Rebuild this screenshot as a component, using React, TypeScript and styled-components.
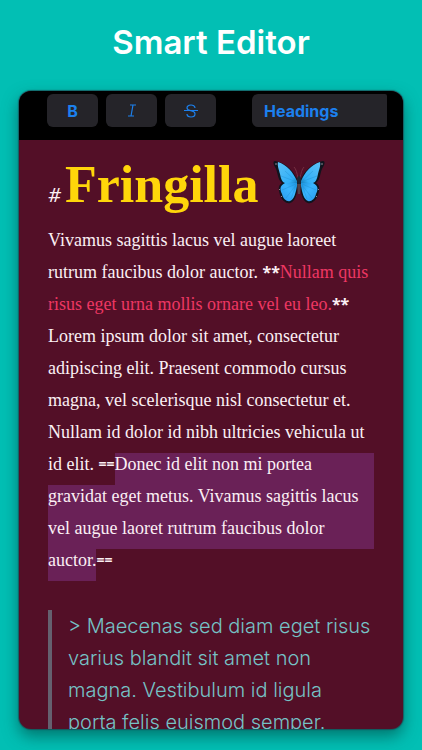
import React from "react";
import styled, { createGlobalStyle } from "styled-components";

const GlobalStyle = createGlobalStyle`
  * { box-sizing: border-box; }
  body { margin: 0; background: #02bfb4; }
`;

const Page = styled.main`
  height: 100vh;
  display: flex;
  flex-direction: column;
  padding: 0 19px 21px;
  background: #02bfb4;
`;

const Title = styled.h1`
  margin: 0;
  padding: 21px 0 28px;
  color: #ffffff;
  font: 600 33px/42px Inter, sans-serif;
  text-align: center;
`;

const Editor = styled.section`
  flex: 1;
  min-height: 0;
  display: flex;
  flex-direction: column;
  overflow: hidden;
  border-radius: 12px;
  background: #530f27;
  box-shadow: 0 0 1px 1px rgba(30, 70, 80, 0.7), 0 7px 16px rgba(0, 65, 60, 0.6);
`;

const Toolbar = styled.div`
  display: flex;
  flex: none;
  gap: 8px;
  height: 49px;
  padding: 3px 16px 13px 28px;
  background: #000000;
`;

const ToolButton = styled.button`
  width: 51px;
  display: flex;
  align-items: center;
  justify-content: center;
  border: 0;
  padding: 0;
  border-radius: 6px;
  background: #252429;
  color: #1c80ee;
  font: 700 16px Inter, sans-serif;
`;

const HeadingsButton = styled(ToolButton)`
  flex: 1;
  justify-content: flex-start;
  margin-left: 28px;
  padding-left: 12px;
  border-radius: 6px 2px 2px 6px;
`;

const Document = styled.article`
  flex: 1;
  min-height: 0;
  overflow: auto;
  scrollbar-width: none;
  padding: 9px 29px 0;
  color: #fbeff4;
`;

const Heading = styled.h2`
  display: flex;
  align-items: baseline;
  margin: 0 0 9px;
  color: #ffd60a;
  font: 700 52px/71px "Liberation Serif", serif;
  white-space: nowrap;
`;

const Hash = styled.span`
  margin-right: 4px;
  color: #fbeff4;
  font: italic 400 20px "Noto Sans", sans-serif;
`;

const ButterflyIcon = styled.svg`
  width: 52px;
  height: 46px;
  margin: 11px 0 0 15px;
  align-self: flex-start;
`;

const Paragraph = styled.p`
  margin: 0 0 29px;
  font: 400 18px/22px "Liberation Serif", serif;
  white-space: nowrap;
`;

const Line = styled.span<{ $marked?: boolean }>`
  display: flex;
  height: 32px;
  white-space: pre;
  background: ${(p) => (p.$marked ? "#6a2157" : "transparent")};
`;

const Marked = styled.mark<{ $fill?: boolean }>`
  flex: ${(p) => (p.$fill ? "1" : "none")};
  background: #6a2157;
  color: inherit;
`;

const Strong = styled.strong`
  color: #ee3763;
  font-weight: 400;
`;

const Token = styled.span<{ $size: number }>`
  font: 700 ${(p) => p.$size}px/22px "Noto Sans", sans-serif;
`;

const Quote = styled.blockquote`
  margin: 0;
  padding-left: 16px;
  border-left: 4px solid #65606f;
  color: #76c2c6;
  font: 300 20px/32px Inter, sans-serif;
  white-space: nowrap;
`;

const QuoteLine = styled.span`
  display: block;
`;

function Wing() {
  return (
    <g>
      <path d="M25 21C21 12 14 3 2 1C0 1 0 4 2 7C5 11 4 19 9 23C4 26 6 31 7 35C9 41 14 44 17 43C22 42 24 34 25 26Z" fill="#10141d" />
      <path d="M24 21C20 12 14 5 5 2C4 5 6 10 7 14C8 19 9 22 12 23L24 23Z" fill="url(#upperWing)" />
      <path d="M24 23L12 23C6 26 7 30 9 34C10 39 14 42 17 41C21 40 23 32 24 26Z" fill="url(#lowerWing)" />
      <path d="M24 22L12 11M24 22L8 16M23 24L9 30M23 25L13 38M23 25L18 39" stroke="#218fd0" strokeWidth="1" opacity=".4" />
      <path d="M2 4H4M6 29L7 30M8 36L9 37" stroke="#8d8694" strokeWidth="1" />
    </g>
  );
}

function Butterfly() {
  return (
    <ButterflyIcon viewBox="0 0 52 46" role="img" aria-label="Butterfly" fill="none">
      <defs>
        <linearGradient id="upperWing" x1="5" y1="5" x2="24" y2="24" gradientUnits="userSpaceOnUse">
          <stop stopColor="#58bff7" />
          <stop offset=".75" stopColor="#31b0f8" />
          <stop offset="1" stopColor="#1579b4" />
        </linearGradient>
        <linearGradient id="lowerWing" x1="24" y1="24" x2="8" y2="40" gradientUnits="userSpaceOnUse">
          <stop stopColor="#1f98e2" />
          <stop offset=".4" stopColor="#3ab5ff" />
          <stop offset="1" stopColor="#2a9cf0" />
        </linearGradient>
      </defs>
      <Wing />
      <g transform="matrix(-1 0 0 1 52 0)"><Wing /></g>
      <path d="M25 18C24 13 23 9 21 7M27 18C28 13 29 9 31 7" stroke="#752f42" strokeWidth="1" />
      <ellipse cx="26" cy="21" rx="2" ry="5" fill="#202632" />
      <path d="M24 24H28L27 34H25Z" fill="#514047" />
    </ButterflyIcon>
  );
}

export default function App() {
  return (
    <>
      <GlobalStyle />
      <Page>
        <Title>Smart Editor</Title>
        <Editor aria-label="Markdown editor">
          <Toolbar role="toolbar" aria-label="Formatting">
            <ToolButton type="button" aria-label="Bold">B</ToolButton>
            <ToolButton type="button" aria-label="Italic">
              <svg width="10" height="13" viewBox="0 0 10 13" fill="none" stroke="currentColor" strokeWidth="1.2"><path d="M3 1H9M1 12H7M6 1L4 12" /></svg>
            </ToolButton>
            <ToolButton type="button" aria-label="Strikethrough">
              <svg width="14" height="14" viewBox="0 0 14 14" fill="none" stroke="currentColor" strokeWidth="1.2"><path d="M11 4C11 0 3 0 3 4C3 8 11 5 11 10C11 14 3 14 3 10M0 6.5H14" /></svg>
            </ToolButton>
            <HeadingsButton type="button">Headings</HeadingsButton>
          </Toolbar>
          <Document>
            <Heading><Hash>#</Hash>Fringilla<Butterfly /></Heading>
            <Paragraph>
              <Line>Vivamus sagittis lacus vel augue laoreet</Line>
              <Line>rutrum faucibus dolor auctor. <Token $size={16}>**</Token><Strong>Nullam quis</Strong></Line>
              <Line><Strong>risus eget urna mollis ornare vel eu leo.</Strong><Token $size={16}>**</Token></Line>
              <Line>Lorem ipsum dolor sit amet, consectetur</Line>
              <Line>adipiscing elit. Praesent commodo cursus</Line>
              <Line>magna, vel scelerisque nisl consectetur et.</Line>
              <Line>Nullam id dolor id nibh ultricies vehicula ut</Line>
              <Line>id elit. <Token $size={14}>==</Token><Marked $fill>Donec id elit non mi portea</Marked></Line>
              <Line $marked>gravidat eget metus. Vivamus sagittis lacus</Line>
              <Line $marked>vel augue laoret rutrum faucibus dolor</Line>
              <Line><Marked>auctor.</Marked><Token $size={14}>==</Token></Line>
            </Paragraph>
            <Quote>
              <QuoteLine>&gt; Maecenas sed diam eget risus</QuoteLine>
              <QuoteLine>varius blandit sit amet non</QuoteLine>
              <QuoteLine>magna. Vestibulum id ligula</QuoteLine>
              <QuoteLine>porta felis euismod semper.</QuoteLine>
            </Quote>
          </Document>
        </Editor>
      </Page>
    </>
  );
}
